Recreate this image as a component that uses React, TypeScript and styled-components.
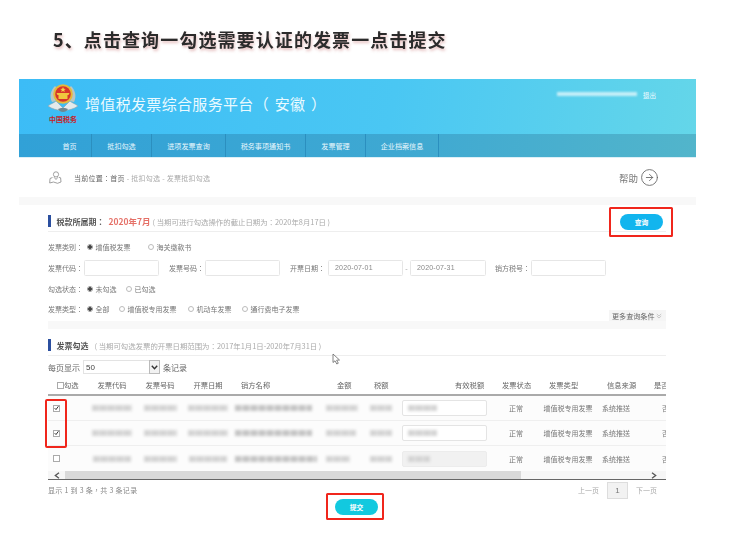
import React from "react";
import styled, { createGlobalStyle } from "styled-components";
import { CircleArrowRight } from "lucide-react";

const Global = createGlobalStyle`
  html, body { margin: 0; padding: 0; background: #fff; }
  body { font-family: "Noto Sans CJK SC", "Liberation Sans", sans-serif; color: #666; }
  * { box-sizing: border-box; }
`;

const Page = styled.div`
  width: 734px;
  height: 541px;
  overflow: hidden;
  padding: 28px 38px 0 19px;
`;
const Title = styled.h1`
  margin: 0 0 27px 34px;
  height: 24px;
  font-size: 18px;
  line-height: 23px;
  font-weight: 700;
  letter-spacing: 1.1px;
  color: #2b2b2b;
  text-shadow: 1px 2px 3px rgba(190, 90, 90, 0.4);
  white-space: nowrap;
  filter: blur(0.3px);
`;
const Panel = styled.div`
  position: relative;
  width: 677px;
  font-family: "Noto Sans CJK TC", "Noto Sans CJK SC", sans-serif;
  filter: blur(0.35px);
`;
const Header = styled.header`
  height: 55px;
  background: linear-gradient(100deg, #3cbcf6 0%, #4ac7f3 55%, #64d6e9 100%);
  display: flex;
  padding: 4px 40px 0 29px;
`;
const LogoBlock = styled.div`
  width: 30px;
  display: flex;
  flex-direction: column;
  align-items: center;
`;
const LogoText = styled.span`
  font-family: "Liberation Serif", "Noto Sans CJK SC", serif;
  font-size: 7px;
  line-height: 9px;
  font-weight: 700;
  color: #c4252c;
  white-space: nowrap;
`;
const BrandName = styled.div`
  margin: 8px 0 0 7px;
  font-family: "Noto Sans CJK SC", sans-serif;
  font-size: 15px;
  line-height: 26px;
  letter-spacing: 0.33px;
  word-spacing: 2px;
  color: #eafaff;
  white-space: pre;
`;
const UserArea = styled.div`
  margin-left: auto;
  display: flex;
  align-items: center;
  gap: 6px;
  height: 24px;
`;
const UserBlur = styled.span`
  width: 80px;
  height: 4px;
  background: rgba(255, 255, 255, 0.65);
  filter: blur(1.3px);
  margin-top: -3px;
`;
const Logout = styled.span`
  font-size: 6.5px;
  color: #f2fbff;
`;
const Nav = styled.nav`
  height: 24px;
  display: flex;
  background: linear-gradient(100deg, #31a1d7 0%, #3ea8d2 55%, #52b5cb 100%);
  border-bottom: 1px solid #dceff7;
`;
const NavItem = styled.div<{ $w: number; $pad?: number }>`
  width: ${(p) => p.$w}px;
  padding-left: ${(p) => p.$pad ?? 0}px;
  display: flex;
  align-items: center;
  justify-content: center;
  font-size: 7.1px;
  color: #e8f7fd;
  border-right: 1px solid #2b8fbf;
  white-space: nowrap;
`;
const Crumb = styled.div`
  height: 39px;
  display: flex;
  align-items: center;
  padding: 0 37px 0 30px;
`;
const CrumbText = styled.div`
  margin-left: 12px;
  font-size: 7px;
  letter-spacing: 0.27px;
  color: #666;
  white-space: pre;
`;
const CrumbSoft = styled.span`
  color: #aaa;
`;
const Help = styled.div`
  margin-left: auto;
  display: flex;
  align-items: center;
  gap: 2px;
  font-size: 9.5px;
  color: #777;
`;
const Band = styled.div`
  height: 8px;
  background: #f8f8f8;
`;
const Content = styled.div`
  position: relative;
  padding: 0 30px 0 29px;
`;
const SectionHead = styled.div`
  height: 27px;
  padding: 6px 3px 0 0;
  display: flex;
  align-items: center;
  border-bottom: 1px solid #eee;
  white-space: nowrap;
`;
const Bar = styled.span`
  width: 2.5px;
  height: 12px;
  background: #2b4f9f;
  margin-right: 6px;
`;
const HeadTitle = styled.span`
  font-size: 8px;
  font-weight: 700;
  color: #555;
`;
const Period = styled.span`
  font-size: 8.5px;
  font-weight: 700;
  color: #e57067;
  margin: 0 2px 0 4px;
`;
const Hint = styled.span<{ $gap?: number }>`
  margin-left: ${(p) => p.$gap ?? 0}px;
  font-size: 7.4px;
  color: #aaa;
`;
const Annotated = styled.div<{ $margin: string }>`
  position: relative;
  margin: ${(p) => p.$margin};
  display: flex;
`;
const Mark = styled.span<{ $inset: string }>`
  position: absolute;
  inset: ${(p) => p.$inset};
  border: 2px solid #f0261c;
  border-radius: 1.5px;
  pointer-events: none;
`;
const PillButton = styled.button<{ $bg: string }>`
  width: 43px;
  height: 16px;
  border: 0;
  padding: 0;
  border-radius: 8px;
  background: ${(p) => p.$bg};
  color: #fff;
  font-family: inherit;
  font-size: 6.8px;
  font-weight: 700;
`;
const Form = styled.div`
  padding-top: 4px;
`;
const FormRow = styled.div<{ $h?: number; $mb?: number }>`
  height: ${(p) => p.$h ?? 21}px;
  margin-bottom: ${(p) => p.$mb ?? 0}px;
  display: flex;
  align-items: center;
  font-size: 7px;
  color: #777;
  white-space: nowrap;
`;
const Label = styled.span<{ $w: number }>`
  width: ${(p) => p.$w}px;
  flex: none;
`;
const RadioInput = styled.input.attrs({ type: "radio", readOnly: true })`
  appearance: none;
  width: 6px;
  height: 6px;
  margin: 0 2.5px 0 0;
  border-radius: 50%;
  border: 1px solid #bbb;
  background: #fff;
  flex: none;
  &:checked {
    background: radial-gradient(circle, #444 0 1.6px, #fff 2px);
    border-color: #999;
  }
`;
const RadioGroup = styled.label<{ $w: number }>`
  width: ${(p) => p.$w}px;
  flex: none;
  display: flex;
  align-items: center;
`;
const TextField = styled.input.attrs({ type: "text", readOnly: true })<{ $w: number; $mr?: number }>`
  width: ${(p) => p.$w}px;
  height: 16px;
  margin-right: ${(p) => p.$mr ?? 0}px;
  padding: 0 6px;
  flex: none;
  border: 1px solid #e6e6e6;
  border-radius: 1.5px;
  font-family: "Liberation Sans", sans-serif;
  font-size: 7px;
  letter-spacing: 0.2px;
  color: #888;
  outline: none;
`;
const Dash = styled.span`
  width: 7px;
  text-align: center;
  color: #999;
`;
const More = styled.div`
  margin: 0 0 -3px auto;
  align-self: flex-end;
  width: 57px;
  height: 11px;
  padding-left: 3px;
  background: #f5f5f5;
  display: flex;
  align-items: center;
  gap: 1px;
  font-size: 7.1px;
  color: #666;
`;
const PageSize = styled.div`
  height: 22px;
  display: flex;
  align-items: center;
  font-size: 8px;
  color: #666;
`;
const Select = styled.div`
  width: 77px;
  height: 14px;
  margin: 0 3px;
  padding-left: 2px;
  display: flex;
  align-items: center;
  justify-content: space-between;
  border: 1px solid #e3e3e3;
  font-family: "Liberation Sans", sans-serif;
  font-size: 8px;
  color: #444;
`;
const SelectArrow = styled.span`
  width: 11px;
  height: 14px;
  margin-right: -1px;
  border: 1px solid #bbb;
  background: #f2f2f2;
  display: flex;
  align-items: center;
  justify-content: center;
`;
const TableWrap = styled.div`
  position: relative;
  width: 618px;
`;
const Table = styled.div`
  overflow: hidden;
`;
const HeadRow = styled.div`
  height: 18px;
  padding-bottom: 2px;
  display: flex;
  align-items: center;
  border-bottom: 2px solid #aaa;
  font-size: 7.3px;
  color: #666;
  white-space: nowrap;
`;
const Row = styled.div<{ $last?: boolean }>`
  height: 25px;
  display: flex;
  align-items: center;
  background: #fcfcfc;
  border-bottom: ${(p) => (p.$last ? "0" : "1px solid #efefef")};
  font-size: 7px;
  color: #777;
  white-space: nowrap;
`;
const Cell = styled.div<{ $w: number; $align?: string; $pad?: number }>`
  width: ${(p) => p.$w}px;
  flex: none;
  display: flex;
  align-items: center;
  justify-content: ${(p) => p.$align ?? "center"};
  padding-left: ${(p) => p.$pad ?? 0}px;
`;
const Check = styled.span`
  width: 7px;
  height: 7px;
  flex: none;
  border: 1px solid #aaa;
  background: #fff;
  display: flex;
  align-items: center;
  justify-content: center;
`;
const Redact = styled.span<{ $w: number; $shade?: string }>`
  width: ${(p) => p.$w}px;
  height: 6px;
  background: repeating-linear-gradient(90deg, ${(p) => p.$shade ?? "#d4d4d4"} 0 6px, #dedede 6px 8px);
  filter: blur(1.7px);
`;
const TaxInput = styled.div<{ $off?: boolean }>`
  width: 85px;
  height: 16px;
  padding-left: 5px;
  display: flex;
  align-items: center;
  border: 1px solid ${(p) => (p.$off ? "#ececec" : "#e4e4e4")};
  border-radius: 2px;
  background: ${(p) => (p.$off ? "#f1f1f1" : "#fff")};
`;
const ScrollTrack = styled.div`
  height: 9px;
  display: flex;
  align-items: center;
  background: #f6f6f6;
  border-bottom: 1px solid #666;
`;
const ArrowSlot = styled.span<{ $push?: boolean }>`
  width: ${(p) => (p.$push ? 24 : 17)}px;
  margin-left: ${(p) => (p.$push ? "auto" : "0")};
  display: flex;
  justify-content: center;
  flex: none;
`;
const Thumb = styled.span`
  width: 456px;
  height: 8px;
  background: #d9d9d9;
`;
const Footer = styled.div`
  height: 19px;
  display: flex;
  align-items: center;
  padding-right: 9px;
  font-size: 7px;
  color: #888;
  letter-spacing: 0.3px;
`;
const Pager = styled.div`
  margin-left: auto;
  display: flex;
  align-items: center;
  gap: 8px;
  font-size: 7px;
  letter-spacing: 0;
  color: #aaa;
`;
const PageNo = styled.span`
  width: 21px;
  height: 17px;
  display: flex;
  align-items: center;
  justify-content: center;
  background: #f2f2f2;
  border: 1px solid #ddd;
  font-family: "Liberation Sans", sans-serif;
  font-size: 8px;
  color: #777;
  margin-top: 2px;
`;
const SubmitRow = styled.div`
  display: flex;
  justify-content: center;
  padding-right: 1px;
`;
const CheckMark = styled.span`
  position: absolute;
  left: -3px;
  top: 21px;
  width: 22px;
  height: 49px;
  border: 2px solid #f0261c;
  border-radius: 2px;
`;
const Cursor = styled.svg`
  position: absolute;
  left: 313px;
  top: 148px;
`;

const navItems: [string, number, number?][] = [
  ["首页", 73, 29],
  ["抵扣勾选", 60],
  ["进项发票查询", 74],
  ["税务事项通知书", 80],
  ["发票管理", 60],
  ["企业档案信息", 73],
];

const headCols: [string, number, number][] = [
  ["发票代码", 48, 0],
  ["发票号码", 48, 0],
  ["开票日期", 48, 0],
];
const headLeft: [string, number, number][] = [
  ["销方名称", 93, 9],
  ["金额", 40, 12],
  ["税额", 32, 9],
  ["有效税额", 93, 58],
  ["发票状态", 50, 12],
  ["发票类型", 50, 9],
  ["信息来源", 60, 17],
  ["是否", 30, 4],
];

const rows = [
  { w: [40, 33, 40, 77, 32, 22], tax: 29, off: false, checked: true },
  { w: [40, 33, 40, 77, 30, 22], tax: 29, off: false, checked: true },
  { w: [38, 33, 38, 82, 24, 22], tax: 22, off: true, checked: false },
];

const Tick = () => (
  <svg width="6" height="6" viewBox="0 0 6 6">
    <path d="M0.8 3.2 L2.4 4.9 L5.3 0.9" fill="none" stroke="#333" strokeWidth="1.2" />
  </svg>
);

const Emblem = () => (
  <svg width="30" height="33" viewBox="0 0 30 33">
    <path d="M0 23 C4 20 6 20 8 18 L15 25 L22 18 C24 20 26 20 30 23 C26 26 21 27 15 28 C9 27 4 26 0 23Z" fill="#e4eaec" stroke="#8fa3aa" strokeWidth="0.6" />
    <path d="M4 19 C1 13 3 7 7 3 L9 5 C6 9 6 14 8 18Z" fill="#b9c6c4" />
    <path d="M26 19 C29 13 27 7 23 3 L21 5 C24 9 24 14 22 18Z" fill="#b9c6c4" />
    <circle cx="15" cy="11" r="9.8" fill="#e5b93c" />
    <circle cx="15" cy="11" r="7.8" fill="#d7332b" />
    <path d="M8.5 10 L21.5 10 L20.5 12 L9.5 12Z" fill="#f0c63e" />
    <rect x="10.5" y="12" width="9" height="4" fill="#f0c63e" />
    <path d="M15 4 l0.8 1.8 2 .1 -1.6 1.1 .6 1.9 -1.8 -1 -1.8 1 .6 -1.9 -1.6 -1.1 2 -.1Z" fill="#f6d24a" />
    <path d="M10 26 C12 30 18 30 20 26 L17 25 L13 25Z" fill="#6f8790" />
  </svg>
);

const PinIcon = () => (
  <svg width="13" height="13" viewBox="0 0 13 13" fill="none" stroke="#888" strokeWidth="0.8">
    <circle cx="7" cy="3.4" r="2.6" />
    <path d="M5 6.2 L7 8.5 L9 6.2" />
    <path d="M3.5 6.5 L1 7.5 L0.7 12 L4.5 11 L8.5 12.3 L12 11 L11.6 6.8 L10 6.3" />
  </svg>
);

const Chevron = ({ dir }: { dir: "left" | "right" }) => (
  <svg width="6" height="7" viewBox="0 0 6 7">
    <path d={dir === "left" ? "M5 .7 L1.3 3.5 L5 6.3" : "M1 .7 L4.7 3.5 L1 6.3"} fill="none" stroke="#555" strokeWidth="1.3" />
  </svg>
);

export default function App() {
  return (
    <Page>
      <Global />
      <Title>5、点击查询一勾选需要认证的发票一点击提交</Title>
      <Panel>
        <Header>
          <LogoBlock>
            <Emblem />
            <LogoText>中国税务</LogoText>
          </LogoBlock>
          <BrandName>增值税发票综合服务平台（ 安徽 ）</BrandName>
          <UserArea>
            <UserBlur />
            <Logout>退出</Logout>
          </UserArea>
        </Header>
        <Nav>
          {navItems.map(([t, w, pad]) => (
            <NavItem key={t} $w={w} $pad={pad}>{t}</NavItem>
          ))}
        </Nav>
        <Crumb>
          <PinIcon />
          <CrumbText>
            当前位置：首页 <CrumbSoft>- 抵扣勾选 - 发票抵扣勾选</CrumbSoft>
          </CrumbText>
          <Help>
            帮助
            <CircleArrowRight size={19} strokeWidth={1.1} color="#666" />
          </Help>
        </Crumb>
        <Band />
        <Content>
          <SectionHead>
            <Bar />
            <HeadTitle>税款所属期：</HeadTitle>
            <Period>2020年7月</Period>
            <Hint>( 当期可进行勾选操作的截止日期为：2020年8月17日 )</Hint>
            <Annotated $margin="2px 0 0 auto">
              <PillButton $bg="#12b5ee">查询</PillButton>
              <Mark $inset="-7px -10px -7px -11px" />
            </Annotated>
          </SectionHead>
          <Form>
            <FormRow>
              <Label $w={39}>发票类别：</Label>
              <RadioGroup $w={61}><RadioInput defaultChecked name="a" />增值税发票</RadioGroup>
              <RadioGroup $w={60}><RadioInput name="a" />海关缴款书</RadioGroup>
            </FormRow>
            <FormRow>
              <Label $w={36}>发票代码：</Label>
              <TextField $w={75} $mr={10} />
              <Label $w={36}>发票号码：</Label>
              <TextField $w={75} $mr={10} />
              <Label $w={38}>开票日期：</Label>
              <TextField $w={75} defaultValue="2020-07-01" />
              <Dash>-</Dash>
              <TextField $w={76} $mr={9} defaultValue="2020-07-31" />
              <Label $w={36}>销方税号：</Label>
              <TextField $w={75} />
            </FormRow>
            <FormRow>
              <Label $w={39}>勾选状态：</Label>
              <RadioGroup $w={39}><RadioInput defaultChecked name="b" />未勾选</RadioGroup>
              <RadioGroup $w={40}><RadioInput name="b" />已勾选</RadioGroup>
            </FormRow>
            <FormRow $h={19} $mb={3}>
              <Label $w={39}>发票类型：</Label>
              <RadioGroup $w={32}><RadioInput defaultChecked name="c" />全部</RadioGroup>
              <RadioGroup $w={69}><RadioInput name="c" />增值税专用发票</RadioGroup>
              <RadioGroup $w={54}><RadioInput name="c" />机动车发票</RadioGroup>
              <RadioGroup $w={70}><RadioInput name="c" />通行费电子发票</RadioGroup>
              <More>
                更多查询条件
                <svg width="6" height="6" viewBox="0 0 6 6">
                  <path d="M.8 1 L3 3 L5.2 1 M.8 3 L3 5 L5.2 3" fill="none" stroke="#aaa" strokeWidth="0.6" />
                </svg>
              </More>
            </FormRow>
          </Form>
          <Band />
          <SectionHead>
            <Bar />
            <HeadTitle>发票勾选</HeadTitle>
            <Hint $gap={6}>( 当期可勾选发票的开票日期范围为：2017年1月1日-2020年7月31日 )</Hint>
          </SectionHead>
          <PageSize>
            每页显示
            <Select>
              50
              <SelectArrow>
                <svg width="7" height="5" viewBox="0 0 7 5">
                  <path d="M.8 .8 L3.5 3.8 L6.2 .8" fill="none" stroke="#333" strokeWidth="1.4" />
                </svg>
              </SelectArrow>
            </Select>
            条记录
          </PageSize>
          <TableWrap>
            <Table>
              <HeadRow>
                <Cell $w={40} $align="flex-start" $pad={9}>
                  <Check />勾选
                </Cell>
                {headCols.map(([t, w]) => (
                  <Cell key={t} $w={w}>{t}</Cell>
                ))}
                {headLeft.map(([t, w, p]) => (
                  <Cell key={t} $w={w} $align="flex-start" $pad={p}>{t}</Cell>
                ))}
              </HeadRow>
              {rows.map((r, i) => (
                <Row key={i} $last={i === 2}>
                  <Cell $w={40} $align="flex-start" $pad={5}>
                    <Check>{r.checked && <Tick />}</Check>
                  </Cell>
                  <Cell $w={48}><Redact $w={r.w[0]} /></Cell>
                  <Cell $w={48}><Redact $w={r.w[1]} /></Cell>
                  <Cell $w={48}><Redact $w={r.w[2]} /></Cell>
                  <Cell $w={88} $align="flex-start" $pad={3}><Redact $w={r.w[3]} $shade="#c4c4c4" /></Cell>
                  <Cell $w={45} $align="flex-start" $pad={6}><Redact $w={r.w[4]} /></Cell>
                  <Cell $w={32}><Redact $w={r.w[5]} /></Cell>
                  <Cell $w={93} $align="flex-start" $pad={5}>
                    <TaxInput $off={r.off}><Redact $w={r.tax} /></TaxInput>
                  </Cell>
                  <Cell $w={52}>正常</Cell>
                  <Cell $w={52}>增值税专用发票</Cell>
                  <Cell $w={44}>系统推送</Cell>
                  <Cell $w={28} $align="flex-start" $pad={24}>否</Cell>
                </Row>
              ))}
              <ScrollTrack>
                <ArrowSlot><Chevron dir="left" /></ArrowSlot>
                <Thumb />
                <ArrowSlot $push><Chevron dir="right" /></ArrowSlot>
              </ScrollTrack>
            </Table>
            <CheckMark />
          </TableWrap>
          <Footer>
            显示 1 到 3 条，共 3 条记录
            <Pager>
              上一页
              <PageNo>1</PageNo>
              下一页
            </Pager>
          </Footer>
          <SubmitRow>
            <Annotated $margin="0">
              <PillButton $bg="#12c9df">提交</PillButton>
              <Mark $inset="-6px -6px -5px -9px" />
            </Annotated>
          </SubmitRow>
          <Cursor width="9" height="12" viewBox="0 0 9 12">
            <path d="M1 1 L1 9.5 L3 7.8 L4.8 11 L6.3 10.2 L4.6 7.2 L7.5 7 Z" fill="#fff" stroke="#666" strokeWidth="0.8" />
          </Cursor>
        </Content>
      </Panel>
    </Page>
  );
}
